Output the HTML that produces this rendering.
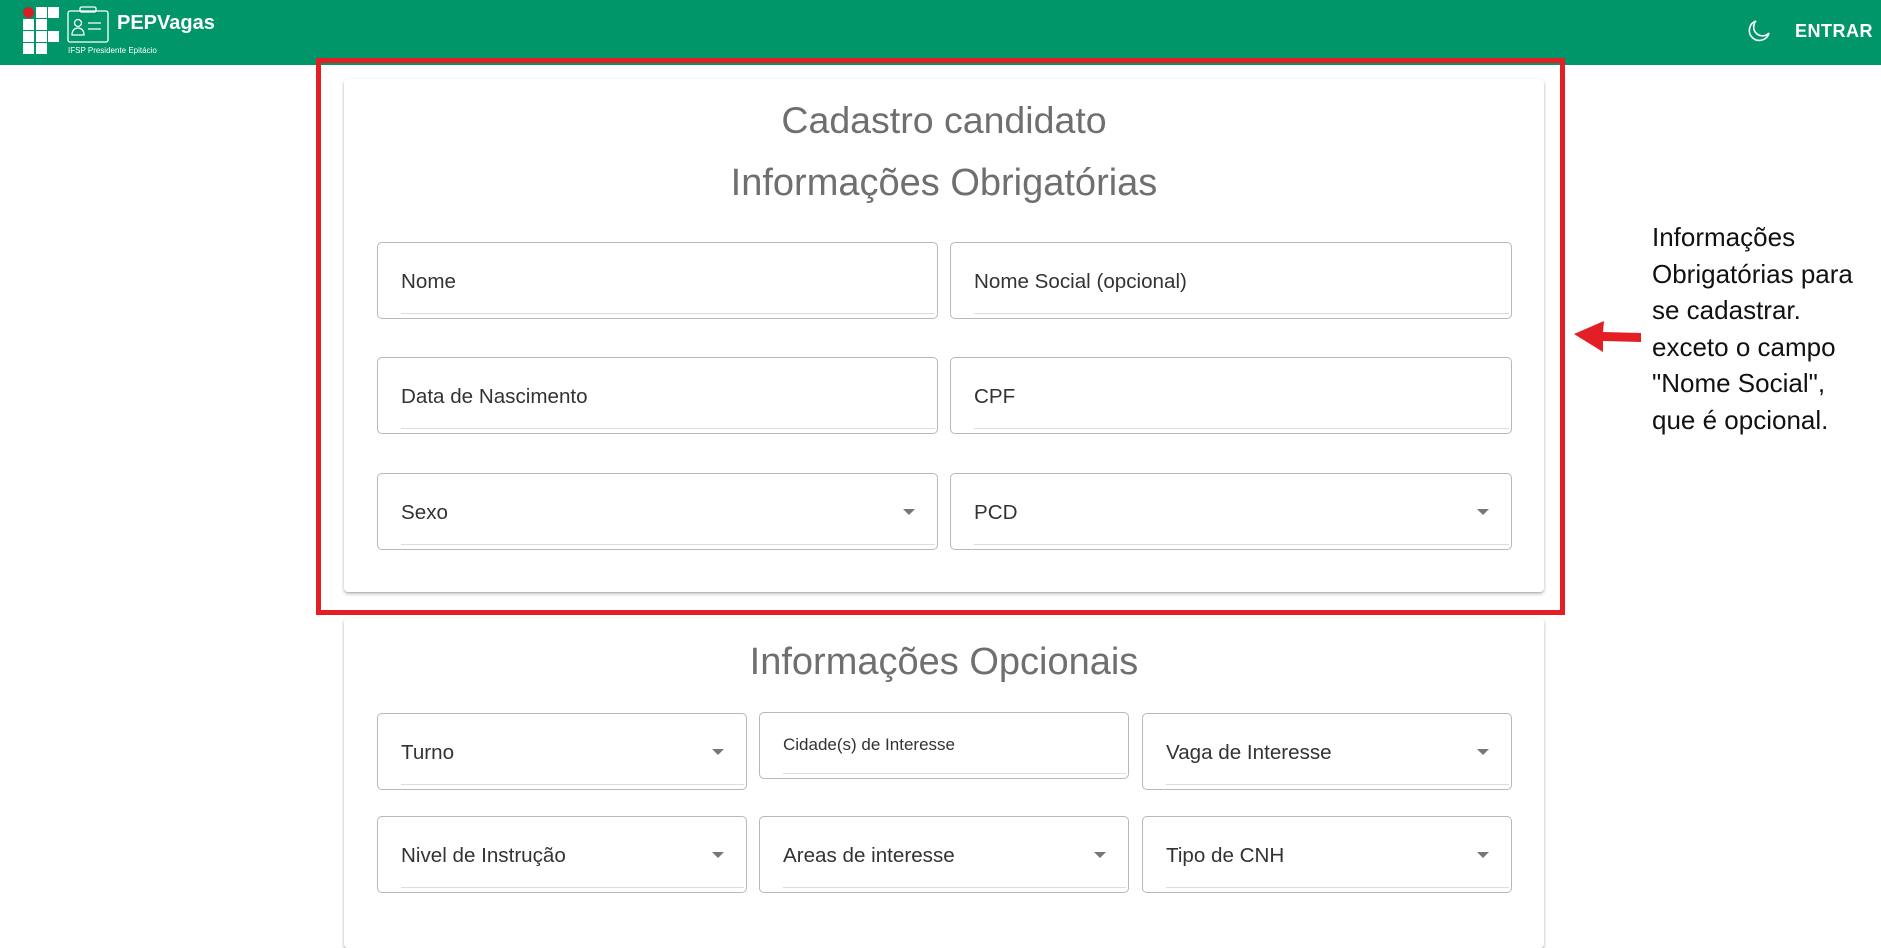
<!DOCTYPE html>
<html><head><meta charset="utf-8"><style>
*{box-sizing:border-box;margin:0;padding:0}
html,body{width:1881px;height:912px;overflow:hidden;background:#fff;font-family:"Liberation Sans",sans-serif}
.hdr{position:absolute;left:0;top:0;width:1881px;height:65px;background:#009669}
.sq{position:absolute;width:11px;height:11px;background:#fff}
.card{position:absolute;left:344px;width:1200px;background:#fff;border-radius:4px;box-shadow:0 2px 3px rgba(0,0,0,.2),0 1px 1px rgba(0,0,0,.1),0 1px 5px rgba(0,0,0,.08)}
.t{position:absolute;left:0;width:100%;text-align:center;color:#6f6f6f}
.f{position:absolute;border:1px solid #b8b8b8;border-radius:5px;height:77px}
.f span{position:absolute;left:23px;top:0;line-height:77px;font-size:20.6px;color:#333}
.f i{position:absolute;left:23px;right:2px;bottom:4px;height:1px;background:#ddd}
.f b{position:absolute;right:22px;top:35px;border-left:6px solid transparent;border-right:6px solid transparent;border-top:6px solid #777}
.ann{position:absolute;left:1652px;top:219px;font-size:26px;line-height:36.5px;color:#111;white-space:nowrap}
</style></head><body>
<div class="hdr">
  <div style="position:absolute;left:23px;top:7px;width:11px;height:11px;border-radius:50%;background:#d32027"></div>
  <div class="sq" style="left:36px;top:7px"></div><div class="sq" style="left:48px;top:7px"></div>
  <div class="sq" style="left:23px;top:19px"></div><div class="sq" style="left:36px;top:19px"></div>
  <div class="sq" style="left:23px;top:31px"></div><div class="sq" style="left:36px;top:31px"></div><div class="sq" style="left:48px;top:31px"></div>
  <div class="sq" style="left:23px;top:43px"></div><div class="sq" style="left:36px;top:43px"></div>
  <svg style="position:absolute;left:67px;top:6px" width="42" height="38" viewBox="0 0 42 38" fill="none" stroke="#fff" stroke-width="1.3">
    <rect x="1" y="5" width="40" height="31" rx="2"/><rect x="13" y="1" width="16" height="5" rx="1.5"/>
    <circle cx="11" cy="17" r="3.5"/><path d="M5 29c0-5 3-7 6-7s6 2 6 7z"/><path d="M21 17h13M21 23h13"/>
  </svg>
  <div style="position:absolute;left:117px;top:12px;color:#fff;font-size:20px;font-weight:bold">PEPVagas</div>
  <div style="position:absolute;left:68px;top:46px;color:#fff;font-size:8px">IFSP Presidente Epitácio</div>
  <svg style="position:absolute;left:1747px;top:19px" width="24" height="24" viewBox="0 0 24 24" fill="none" stroke="#fff" stroke-width="1.6"><path d="M9 2a10 10 0 1 0 13 12A8.5 8.5 0 0 1 9 2z"/></svg>
  <div style="position:absolute;left:1795px;top:21px;color:#fff;font-size:18px;font-weight:bold;letter-spacing:.5px">ENTRAR</div>
</div>

<div class="card" style="top:79px;height:513px">
  <div class="t" style="top:20px;font-size:37.5px">Cadastro candidato</div>
  <div class="t" style="top:83px;font-size:38px">Informações Obrigatórias</div>
</div>
<div class="card" style="top:618px;height:330px">
  <div class="t" style="top:23px;font-size:38px">Informações Opcionais</div>
</div>

<div class="f" style="left:377px;top:242px;width:561px"><span>Nome</span><i></i></div>
<div class="f" style="left:950px;top:242px;width:562px"><span>Nome Social (opcional)</span><i></i></div>
<div class="f" style="left:377px;top:357px;width:561px"><span>Data de Nascimento</span><i></i></div>
<div class="f" style="left:950px;top:357px;width:562px"><span>CPF</span><i></i></div>
<div class="f" style="left:377px;top:473px;width:561px"><span>Sexo</span><b></b><i></i></div>
<div class="f" style="left:950px;top:473px;width:562px"><span>PCD</span><b></b><i></i></div>

<div class="f" style="left:377px;top:713px;width:370px"><span>Turno</span><b></b><i></i></div>
<div class="f" style="left:759px;top:712px;width:370px;height:67px"><span style="line-height:63px;font-size:17px">Cidade(s) de Interesse</span><i></i></div>
<div class="f" style="left:1142px;top:713px;width:370px"><span>Vaga de Interesse</span><b></b><i></i></div>
<div class="f" style="left:377px;top:816px;width:370px"><span>Nivel de Instrução</span><b></b><i></i></div>
<div class="f" style="left:759px;top:816px;width:370px"><span>Areas de interesse</span><b></b><i></i></div>
<div class="f" style="left:1142px;top:816px;width:370px"><span>Tipo de CNH</span><b></b><i></i></div>

<div style="position:absolute;left:316px;top:58px;width:1249px;height:557px;border:5px solid #e31e24"></div>
<svg style="position:absolute;left:1570px;top:318px" width="75" height="38" viewBox="0 0 75 38"><path d="M4 16L34 3L33 14L71 15L71 24L33 23L33 34Z" fill="#e31e24"/></svg>
<div class="ann">Informações<br>Obrigatórias para<br>se cadastrar.<br>exceto o campo<br>"Nome Social",<br>que é opcional.</div>
</body></html>
